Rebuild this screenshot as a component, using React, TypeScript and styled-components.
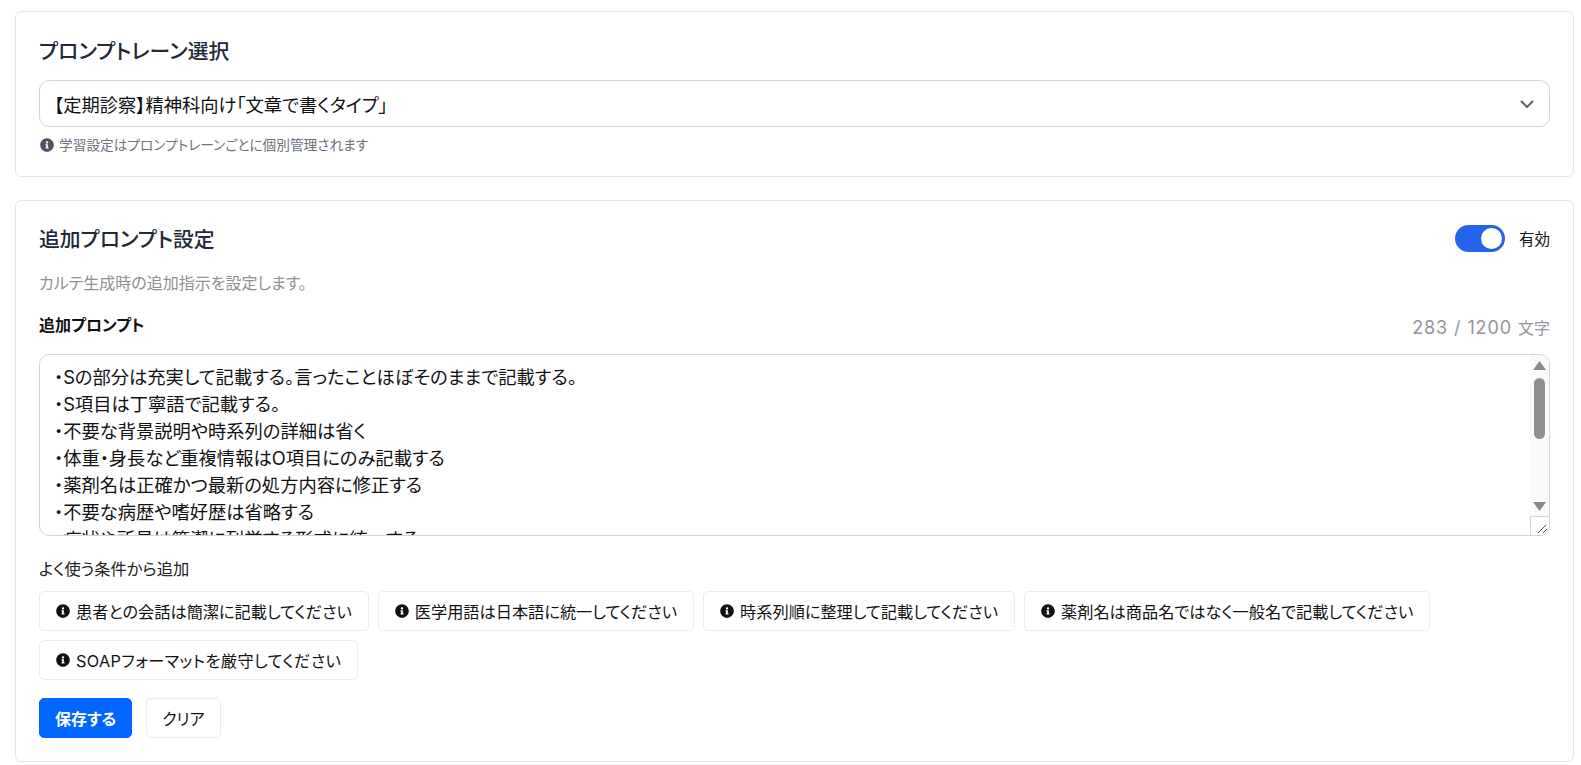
import React from 'react';
import styled, { createGlobalStyle } from 'styled-components';
import { FaInfoCircle } from 'react-icons/fa';

const GlobalStyle = createGlobalStyle`
  html, body {
    margin: 0;
    padding: 0;
    background: #ffffff;
  }
  body {
    font-family: Inter, "Noto Sans CJK JP", sans-serif;
    font-feature-settings: "palt";
    color: #111111;
  }
  * {
    box-sizing: border-box;
  }
`;

const Page = styled.div`
  display: flex;
  flex-direction: column;
  gap: 23px;
  padding: 11px 7px 0 15px;
  height: 765px;
  overflow: hidden;
`;

const Card = styled.section`
  border: 1px solid #e6e6eb;
  border-radius: 6px;
  background: #fff;
  padding: 24px 23px 21px;
`;

const Title = styled.h2`
  margin: 0;
  font-size: 20.8px;
  line-height: 30px;
  font-weight: 500;
  color: #1f2937;
`;

const SelectTitle = styled(Title)`
  margin-top: 1px;
`;

const SelectBox = styled.div`
  display: flex;
  align-items: center;
  justify-content: space-between;
  height: 47px;
  margin-top: 13px;
  padding: 0 14px;
  border: 1px solid #d1d5db;
  border-radius: 10px;
  font-size: 18.3px;
  color: #111;
`;

const Hint = styled.p`
  display: flex;
  align-items: center;
  gap: 5px;
  margin: 8px 0 0;
  font-size: 13.7px;
  line-height: 20px;
  color: #6b7280;
  svg {
    width: 14px;
    height: 14px;
    color: #4b5563;
    margin-left: 1px;
  }
`;

const HeaderRow = styled.div`
  display: flex;
  align-items: center;
  justify-content: space-between;
  height: 30px;
`;

const ToggleWrap = styled.div`
  display: flex;
  align-items: center;
  gap: 14px;
  margin-bottom: 4px;
  font-size: 15.5px;
  color: #111;
`;

const ToggleTrack = styled.span`
  display: flex;
  align-items: center;
  justify-content: flex-end;
  width: 50px;
  height: 27px;
  padding: 0 3px;
  border-radius: 14px;
  background: #2563eb;
`;

const ToggleKnob = styled.span`
  width: 21px;
  height: 21px;
  border-radius: 50%;
  background: #fff;
`;

const Description = styled.p`
  margin: 16px 0 0;
  font-size: 16px;
  line-height: 24px;
  color: #8f8f94;
`;

const FieldHeader = styled.div`
  display: flex;
  align-items: flex-start;
  justify-content: space-between;
  height: 40px;
  margin-top: 19px;
`;

const FieldLabel = styled.label`
  font-size: 16px;
  line-height: 22px;
  font-weight: 700;
  color: #111;
`;

const Counter = styled.span`
  margin-top: 3px;
  font-size: 18px;
  line-height: 22px;
  letter-spacing: 0.9px;
  color: #94949a;
`;

const CounterUnit = styled.span`
  font-size: 16px;
  letter-spacing: 0;
`;

const TextareaWrap = styled.div`
  position: relative;
  height: 182px;
`;

const Textarea = styled.textarea`
  display: block;
  width: 100%;
  height: 100%;
  padding: 9px 60px 0 14px;
  border: 1px solid #d1d5db;
  border-radius: 10px;
  outline: none;
  resize: none;
  overflow: hidden;
  font: inherit;
  font-feature-settings: "palt";
  font-size: 18.3px;
  line-height: 27px;
  color: #111;
`;

const Scrollbar = styled.div`
  position: absolute;
  top: 1px;
  right: 1px;
  bottom: 19px;
  width: 19px;
  display: flex;
  flex-direction: column;
  align-items: center;
  justify-content: space-between;
  background: #fafafa;
  border-top-right-radius: 9px;
  padding: 6px 0;
  color: #8a8a8a;
`;

const ScrollThumb = styled.div`
  width: 11px;
  height: 61px;
  margin-top: 8px;
  margin-bottom: auto;
  border-radius: 6px;
  background: #8f8f8f;
`;

const ResizeCorner = styled.div`
  position: absolute;
  right: 1px;
  bottom: 1px;
  width: 19px;
  height: 19px;
  display: flex;
  align-items: flex-end;
  justify-content: flex-end;
  background: #fff;
  border-top: 1px solid #d4d4d4;
  border-left: 1px solid #d4d4d4;
  border-bottom-right-radius: 9px;
`;

const ConditionLabel = styled.p`
  margin: 21px 0 0;
  font-size: 16.3px;
  line-height: 24px;
  color: #222;
`;

const ChipRow = styled.div`
  display: flex;
  flex-wrap: wrap;
  gap: 9px;
  margin-top: 10px;
`;

const Chip = styled.button<{ $wide?: boolean }>`
  display: inline-flex;
  align-items: center;
  gap: 6px;
  height: 40px;
  padding: 0 16px;
  border: 1px solid #ececf0;
  border-radius: 5px;
  background: #fff;
  font: inherit;
  font-feature-settings: "palt";
  font-size: 16.2px;
  letter-spacing: ${p => (p.$wide ? '0.4px' : '0')};
  color: #111;
  svg {
    width: 14px;
    height: 14px;
    flex: none;
  }
`;

const ButtonRow = styled.div`
  display: flex;
  gap: 14px;
  margin: 18px 0 2px;
`;

const Button = styled.button<{ $primary?: boolean }>`
  height: 40px;
  padding: 0 15px;
  border: 1px solid ${p => (p.$primary ? '#0066ff' : '#ececf0')};
  border-radius: 5px;
  background: ${p => (p.$primary ? '#0066ff' : '#fff')};
  color: ${p => (p.$primary ? '#fff' : '#111')};
  font: inherit;
  font-feature-settings: "palt";
  font-size: 16px;
  font-weight: ${p => (p.$primary ? 700 : 400)};
`;

const chips = [
  { text: '患者との会話は簡潔に記載してください' },
  { text: '医学用語は日本語に統一してください' },
  { text: '時系列順に整理して記載してください' },
  { text: '薬剤名は商品名ではなく一般名で記載してください' },
  { text: 'SOAPフォーマットを厳守してください', wide: true },
];

const promptText = [
  '・Sの部分は充実して記載する。言ったことほぼそのままで記載する。',
  '・S項目は丁寧語で記載する。',
  '・不要な背景説明や時系列の詳細は省く',
  '・体重・身長など重複情報はO項目にのみ記載する',
  '・薬剤名は正確かつ最新の処方内容に修正する',
  '・不要な病歴や嗜好歴は省略する',
  '・症状や所見は箇潔に列挙する形式に統一する',
].join('\n');

const App = () => {
  return (
    <Page>
      <GlobalStyle />
      <Card>
        <SelectTitle>プロンプトレーン選択</SelectTitle>
        <SelectBox>
          <span>【定期診察】精神科向け「文章で書くタイプ」</span>
          <svg width="16" height="16" viewBox="0 0 16 16" fill="none" stroke="#5f6368" strokeWidth="2" strokeLinecap="round" strokeLinejoin="round">
            <path d="M2.5 5.5L8 11l5.5-5.5" />
          </svg>
        </SelectBox>
        <Hint>
          <FaInfoCircle />
          学習設定はプロンプトレーンごとに個別管理されます
        </Hint>
      </Card>
      <Card>
        <HeaderRow>
          <Title>追加プロンプト設定</Title>
          <ToggleWrap>
            <ToggleTrack>
              <ToggleKnob />
            </ToggleTrack>
            有効
          </ToggleWrap>
        </HeaderRow>
        <Description>カルテ生成時の追加指示を設定します。</Description>
        <FieldHeader>
          <FieldLabel>追加プロンプト</FieldLabel>
          <Counter>
            283 / 1200 <CounterUnit>文字</CounterUnit>
          </Counter>
        </FieldHeader>
        <TextareaWrap>
          <Textarea readOnly defaultValue={promptText} />
          <Scrollbar>
            <svg width="13" height="9" viewBox="0 0 13 9" fill="currentColor">
              <path d="M6.5 0L13 9H0z" />
            </svg>
            <ScrollThumb />
            <svg width="13" height="9" viewBox="0 0 13 9" fill="currentColor">
              <path d="M0 0h13L6.5 9z" />
            </svg>
          </Scrollbar>
          <ResizeCorner>
            <svg width="13" height="13" viewBox="0 0 13 13" fill="none" stroke="#555" strokeWidth="1">
              <path d="M2 11L10 3M7 11l4-4" />
            </svg>
          </ResizeCorner>
        </TextareaWrap>
        <ConditionLabel>よく使う条件から追加</ConditionLabel>
        <ChipRow>
          {chips.map(chip => (
            <Chip key={chip.text} $wide={chip.wide}>
              <FaInfoCircle />
              {chip.text}
            </Chip>
          ))}
        </ChipRow>
        <ButtonRow>
          <Button $primary>保存する</Button>
          <Button>クリア</Button>
        </ButtonRow>
      </Card>
    </Page>
  );
};

export default App;
